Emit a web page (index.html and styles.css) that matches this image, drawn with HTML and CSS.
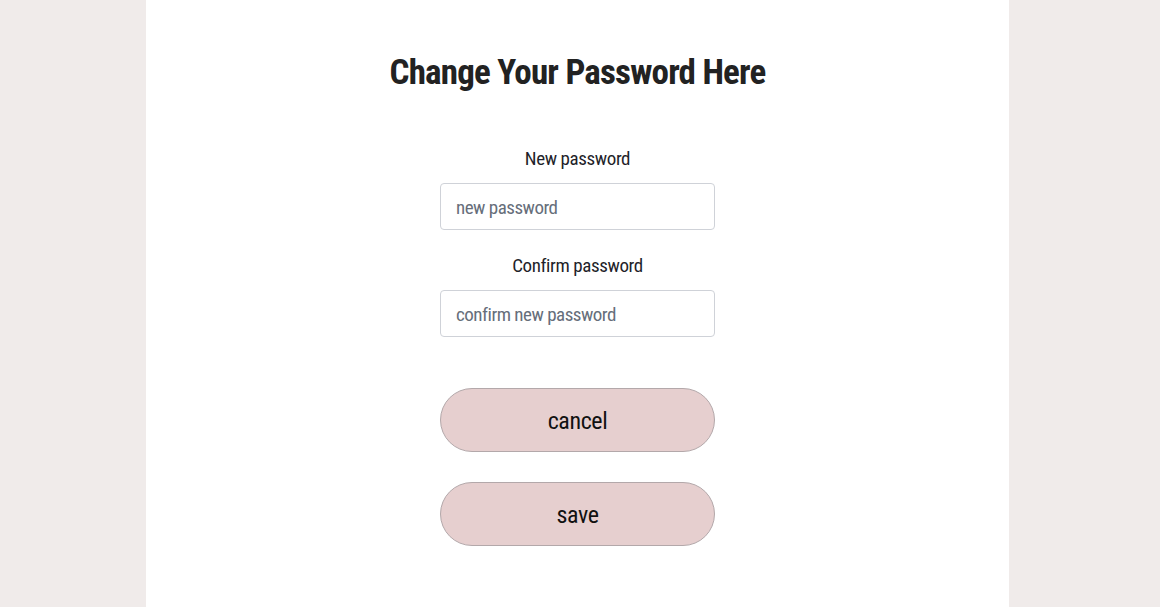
FILE: index.html
```html
<!DOCTYPE html>
<html>
<head>
<meta charset="utf-8">
<link rel="stylesheet" href="styles.css">
</head>
<body>
<div class="page">
  <main class="panel">
    <h1 class="title">Change Your Password Here</h1>
    <form class="form">
      <label class="label" for="np">New password</label>
      <input class="input" id="np" type="password" placeholder="new password">
      <label class="label second" for="cp">Confirm password</label>
      <input class="input" id="cp" type="password" placeholder="confirm new password">
      <button class="btn first" type="button">cancel</button>
      <button class="btn" type="button">save</button>
    </form>
  </main>
</div>
</body>
</html>
```
FILE: styles.css
```css
html, body {
  margin: 0;
  padding: 0;
  height: 100%;
}
body {
  background: #f0ebea;
  font-family: "Roboto Condensed", "Open Sans", sans-serif;
}
.page {
  display: flex;
  min-height: 100%;
  padding-left: 146px;
}
.panel {
  width: 863px;
  background: #ffffff;
  display: flex;
  flex-direction: column;
  align-items: center;
  min-height: 607px;
}
.title {
  margin: 50px 0 0;
  font-size: 35px;
  font-weight: 700;
  color: #222222;
  line-height: 46px;
  letter-spacing: -0.8px;
}
.form {
  display: flex;
  flex-direction: column;
  align-items: center;
  margin-top: 51px;
  width: 275px;
}
.label {
  font-size: 19px;
  color: #1f1f2a;
  line-height: 24px;
  margin-bottom: 12px;
  letter-spacing: -0.4px;
}
.label.second {
  margin-top: 24px;
}
.input {
  box-sizing: border-box;
  width: 275px;
  height: 47px;
  border: 1px solid #cfd2d8;
  border-radius: 4px;
  padding: 2px 15px 0;
  font-family: inherit;
  font-size: 19px;
  letter-spacing: -0.5px;
  color: #333;
  background: #fff;
}
.input::placeholder {
  color: #666e7a;
}
.btn {
  box-sizing: border-box;
  width: 275px;
  height: 64px;
  border-radius: 32px;
  border: 1px solid #b3a8aa;
  background: #e6cfcf;
  font-family: inherit;
  font-size: 24px;
  letter-spacing: -0.4px;
  color: #111;
  margin-top: 30px;
  padding: 2px 0 0;
  cursor: pointer;
}
.btn.first {
  margin-top: 51px;
}
```
